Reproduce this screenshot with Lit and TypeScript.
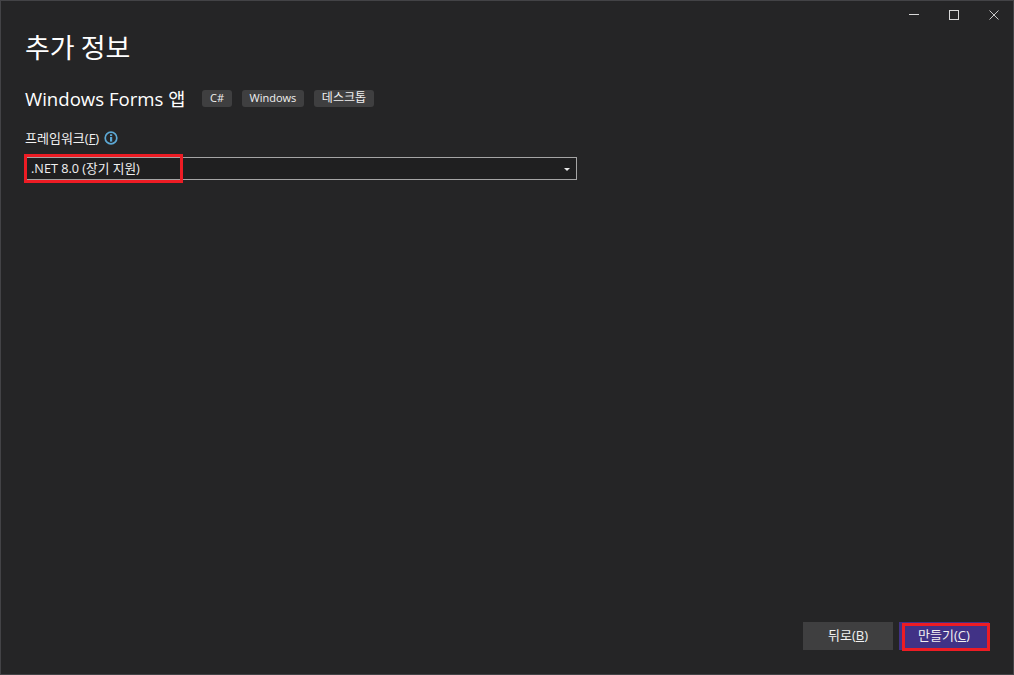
import { LitElement, html, css } from "lit";
import { customElement } from "lit/decorators.js";

@customElement("app-root")
export class AppRoot extends LitElement {
  static styles = css`
    :host {
      display: block;
      width: 1014px;
      height: 675px;
      font-family: "Open Sans", "Noto Sans CJK KR", sans-serif;
      color: #f1f1f1;
    }
    .window {
      box-sizing: border-box;
      width: 1014px;
      height: 675px;
      background: #252526;
      border: 1px solid #434346;
      display: flex;
      flex-direction: column;
      position: relative;
      overflow: hidden;
    }
    .titlebar {
      height: 29px;
      display: flex;
      justify-content: flex-end;
      align-items: center;
      flex: none;
    }
    .winbtn {
      box-sizing: border-box;
      width: 40px;
      height: 29px;
      padding-left: 16px;
      display: flex;
      align-items: center;
    }
    .winbtn svg { display: block; }
    .content {
      flex: 1;
      padding: 0 0 0 24px;
      display: flex;
      flex-direction: column;
      align-items: flex-start;
    }
    h1 {
      margin: 0;
      padding-top: 1px;
      font-family: "Noto Sans CJK KR", sans-serif;
      font-weight: 400;
      font-size: 27px;
      line-height: 32px;
      height: 31px;
      color: #fff;
    }
    .sub {
      margin-top: 21px;
      display: flex;
      align-items: center;
      height: 30px;
    }
    h2 {
      margin: 0;
      padding-top: 1px;
      font-weight: 400;
      font-size: 18.6px;
      line-height: 30px;
      height: 29px;
      color: #fff;
      width: 177px;
      white-space: nowrap;
    }
    .tags { display: flex; gap: 10px; }
    .tag {
      height: 17px;
      line-height: 16px;
      padding: 0 8px;
      background: #3f3f40;
      border-radius: 3px;
      font-size: 11px;
      color: #f1f1f1;
      white-space: nowrap;
    }
    .tag.wide { font-size: 12px; padding: 0 8px; }
    .tag.win { padding: 0 7.5px; }
    .label-row {
      margin-top: 15px;
      height: 20px;
      display: flex;
      align-items: center;
      gap: 5px;
      font-size: 13px;
      color: #f1f1f1;
    }
    .label-text { margin-bottom: 2px; }
    u { text-underline-offset: 1px; }
    .select {
      box-sizing: border-box;
      margin-top: 9px;
      width: 552px;
      height: 23px;
      background: #1f1f20;
      border: 1px solid #a5a5a5;
      display: flex;
      align-items: center;
      justify-content: space-between;
      padding: 0 6px 0 5px;
      font-size: 12.7px;
      color: #f1f1f1;
      white-space: nowrap;
    }
    .select-text { margin-bottom: 2px; }
    .arrow {
      width: 0;
      height: 0;
      border-left: 3px solid transparent;
      border-right: 3px solid transparent;
      border-top: 3px solid #e8e8e8;
      margin-top: 2px;
    }
    .footer {
      flex: none;
      height: 52px;
      display: flex;
      justify-content: flex-end;
      align-items: flex-start;
      gap: 6px;
      padding-right: 24px;
    }
    .btn {
      box-sizing: border-box;
      width: 90px;
      height: 28px;
      padding-bottom: 3px;
      display: flex;
      align-items: center;
      justify-content: center;
      font-size: 13px;
      color: #f1f1f1;
      background: #3f3f40;
    }
    .btn.primary { background: #413286; }
    .mark {
      position: absolute;
      box-sizing: border-box;
      border: 3px solid #ed1c24;
      pointer-events: none;
    }
    .mark.a { left: 23px; top: 153px; width: 159px; height: 29px; }
    .mark.b { left: 901px; top: 622px; width: 88px; height: 28px; }
  `;

  render() {
    return html`
      <div class="window">
        <div class="titlebar">
          <div class="winbtn">
            <svg width="11" height="11" viewBox="0 0 11 11"><path d="M0 4.5h10" stroke="#d8d8d8" fill="none"/></svg>
          </div>
          <div class="winbtn">
            <svg width="11" height="11" viewBox="0 0 11 11"><rect x="0.5" y="0.5" width="9" height="9" stroke="#d8d8d8" fill="none"/></svg>
          </div>
          <div class="winbtn">
            <svg width="11" height="11" viewBox="0 0 11 11"><path d="M0.5 0.5l9 9M9.5 0.5l-9 9" stroke="#c8c8c8" fill="none"/></svg>
          </div>
        </div>
        <div class="content">
          <h1>추가 정보</h1>
          <div class="sub">
            <h2>Windows Forms 앱</h2>
            <div class="tags">
              <span class="tag">C#</span>
              <span class="tag win">Windows</span>
              <span class="tag wide">데스크톱</span>
            </div>
          </div>
          <div class="label-row">
            <span class="label-text">프레임워크(<u>F</u>)</span>
            <svg width="14" height="14" viewBox="0 0 14 14">
              <circle cx="7" cy="7" r="5.8" fill="none" stroke="#5ca8d4" stroke-width="1.7"/>
              <rect x="6" y="6" width="2.2" height="4.6" fill="#5ca8d4"/>
              <rect x="6" y="3.3" width="2.2" height="1.8" fill="#5ca8d4"/>
            </svg>
          </div>
          <div class="select">
            <span class="select-text">.NET 8.0 (장기 지원)</span>
            <span class="arrow"></span>
          </div>
        </div>
        <div class="footer">
          <div class="btn">뒤로(<u>B</u>)</div>
          <div class="btn primary">만들기(<u>C</u>)</div>
        </div>
        <div class="mark a"></div>
        <div class="mark b"></div>
      </div>
    `;
  }
}
